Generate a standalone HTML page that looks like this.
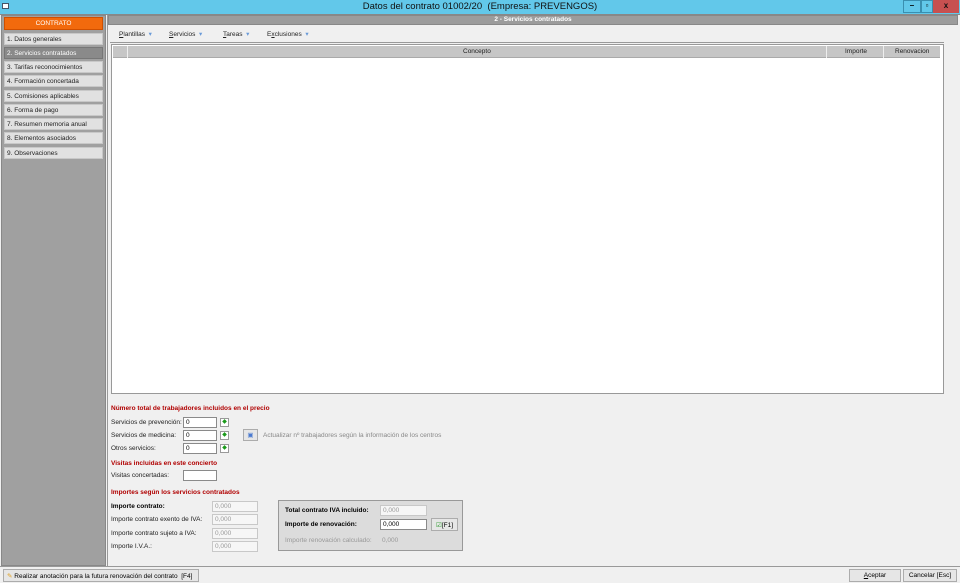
<!DOCTYPE html><html><head><style>
*{margin:0;padding:0;box-sizing:border-box}
body{width:960px;height:583px;background:#f0f0f0;font-family:"Liberation Sans",sans-serif;font-size:6.5px;color:#000;position:relative;overflow:hidden}
div{white-space:nowrap}
.a{position:absolute}
.nav{position:absolute;left:4px;width:99px;height:12px;background:#e1e1e1;border:1px solid #c8c8c8;padding:2px 0 0 2px;font-size:6.5px;color:#222}
.lbl{position:absolute;font-size:6.5px;color:#222}
.in{position:absolute;height:11px;background:#fff;border:1px solid #8a8a8a;font-size:6.5px;padding:1px 2px;color:#000}
.dis{border-color:#c8c8c8;color:#999;background:#f6f6f6}
.h{position:absolute;font-weight:bold;color:#b00000;font-size:6.5px}
.g{position:absolute;width:9px;height:9px;border:1px solid #999;background:#fff;color:#1a9a1a;font-size:6px;line-height:7px;text-align:center}
.btn{position:absolute;height:13px;background:#e6e6e6;border:1px solid #acacac;font-size:6.5px;padding:2px 0;text-align:center}
</style></head><body>
<div class="a" style="left:0;top:0;width:960px;height:14px;background:#62c8ea"></div>
<div class="a" style="left:2px;top:3px;width:7px;height:6px;background:#fff;border:1px solid #456"></div>
<div class="a" style="left:0;top:1px;width:960px;text-align:center;font-size:9.5px;color:#111">Datos del contrato 01002/20 &nbsp;(Empresa: PREVENGOS)</div>
<div class="a" style="left:903px;top:0;width:18px;height:13px;border:1px solid #3a8fb0;text-align:center;font-size:8px;font-weight:bold">–</div>
<div class="a" style="left:921px;top:0;width:12px;height:13px;border:1px solid #3a8fb0;text-align:center;font-size:8px;font-weight:bold">▫</div>
<div class="a" style="left:933px;top:0;width:26px;height:13px;background:#c75050;text-align:center;font-size:8px;font-weight:bold;color:#111;padding-top:1px">x</div>
<div class="a" style="left:0;top:14px;width:960px;height:1px;background:#888"></div>
<div class="a" style="left:1px;top:15px;width:105px;height:551px;background:#a0a0a0;border:1px solid #888"></div>
<div class="a" style="left:4px;top:17px;width:99px;height:13px;background:#f26a0d;border:1px solid #d05000;color:#fff;text-align:center;font-size:6.5px;padding-top:2px">CONTRATO</div>
<div class="nav" style="top:33px">1. Datos generales</div>
<div class="nav" style="top:47px;background:#8a8a8a;color:#fff;border-color:#777">2. Servicios contratados</div>
<div class="nav" style="top:61px">3. Tarifas reconocimientos</div>
<div class="nav" style="top:75px">4. Formación concertada</div>
<div class="nav" style="top:90px">5. Comisiones aplicables</div>
<div class="nav" style="top:104px">6. Forma de pago</div>
<div class="nav" style="top:118px">7. Resumen memoria anual</div>
<div class="nav" style="top:132px">8. Elementos asociados</div>
<div class="nav" style="top:147px">9. Observaciones</div>
<div class="a" style="left:107px;top:15px;width:852px;height:552px;border-left:1px solid #999"></div>
<div class="a" style="left:108px;top:15px;width:850px;height:10px;background:#9c9c9c;border:1px solid #888;color:#fff;text-align:center;font-size:6.5px;font-weight:bold">2 - Servicios contratados</div>
<div class="lbl" style="left:119px;top:30px"><u>P</u>lantillas &nbsp;<span style="color:#6a9ad8">▾</span></div>
<div class="lbl" style="left:169px;top:30px"><u>S</u>ervicios &nbsp;<span style="color:#6a9ad8">▾</span></div>
<div class="lbl" style="left:223px;top:30px"><u>T</u>areas &nbsp;<span style="color:#6a9ad8">▾</span></div>
<div class="lbl" style="left:267px;top:30px">E<u>x</u>clusiones &nbsp;<span style="color:#6a9ad8">▾</span></div>
<div class="a" style="left:110px;top:42px;width:834px;height:1px;background:#999"></div>
<div class="a" style="left:111px;top:44px;width:833px;height:350px;background:#fff;border:1px solid #999"></div>
<div class="a" style="left:113px;top:46px;width:827px;height:12px;background:#c6c6c6;border-bottom:1px solid #aaa"></div>
<div class="a" style="left:127px;top:46px;width:1px;height:12px;background:#eee"></div>
<div class="a" style="left:826px;top:46px;width:1px;height:12px;background:#eee"></div>
<div class="a" style="left:883px;top:46px;width:1px;height:12px;background:#eee"></div>
<div class="lbl" style="left:463px;top:48px">Concepto</div>
<div class="lbl" style="left:845px;top:48px">Importe</div>
<div class="lbl" style="left:895px;top:48px">Renovacion</div>
<div class="h" style="left:111px;top:405px">Número total de trabajadores incluidos en el precio</div>
<div class="lbl" style="left:111px;top:419px">Servicios de prevención:</div>
<div class="in" style="left:183px;top:417px;width:34px">0</div><div class="g" style="left:220px;top:418px">◆</div>
<div class="lbl" style="left:111px;top:432px">Servicios de medicina:</div>
<div class="in" style="left:183px;top:430px;width:34px">0</div><div class="g" style="left:220px;top:431px">◆</div>
<div class="btn" style="left:243px;top:429px;width:15px;height:12px;padding:1px;color:#4a7ad0">▣</div>
<div class="lbl" style="left:263px;top:432px;color:#888">Actualizar nº trabajadores según la información de los centros</div>
<div class="lbl" style="left:111px;top:445px">Otros servicios:</div>
<div class="in" style="left:183px;top:443px;width:34px">0</div><div class="g" style="left:220px;top:444px">◆</div>
<div class="h" style="left:111px;top:460px">Visitas incluidas en este concierto</div>
<div class="lbl" style="left:111px;top:472px">Visitas concertadas:</div>
<div class="in" style="left:183px;top:470px;width:34px"></div>
<div class="h" style="left:111px;top:489px">Importes según los servicios contratados</div>
<div class="lbl" style="left:111px;top:503px;font-weight:bold;color:#000">Importe contrato:</div>
<div class="in dis" style="left:212px;top:501px;width:46px">0,000</div>
<div class="lbl" style="left:111px;top:516px">Importe contrato exento de IVA:</div>
<div class="in dis" style="left:212px;top:514px;width:46px">0,000</div>
<div class="lbl" style="left:111px;top:530px">Importe contrato sujeto a IVA:</div>
<div class="in dis" style="left:212px;top:528px;width:46px">0,000</div>
<div class="lbl" style="left:111px;top:543px">Importe I.V.A.:</div>
<div class="in dis" style="left:212px;top:541px;width:46px">0,000</div>
<div class="a" style="left:278px;top:500px;width:185px;height:51px;background:#dcdcdc;border:1px solid #999"></div>
<div class="lbl" style="left:285px;top:507px;font-weight:bold;color:#000">Total contrato IVA incluido:</div>
<div class="in dis" style="left:380px;top:505px;width:47px">0,000</div>
<div class="lbl" style="left:285px;top:521px;font-weight:bold;color:#000">Importe de renovación:</div>
<div class="in" style="left:380px;top:519px;width:47px">0,000</div>
<div class="btn" style="left:431px;top:518px;width:27px"><span style="color:#2a9a2a">☑</span>[F1]</div>
<div class="lbl" style="left:285px;top:537px;color:#999">Importe renovación calculado:</div>
<div class="lbl" style="left:382px;top:537px;color:#999">0,000</div>
<div class="a" style="left:0;top:566px;width:960px;height:1px;background:#999"></div>
<div class="btn" style="left:3px;top:569px;width:196px;text-align:left;padding-left:3px"><span style="color:#e0a020">✎</span> Realizar anotación para la futura renovación del contrato &nbsp;[F4]</div>
<div class="btn" style="left:849px;top:569px;width:52px"><u>A</u>ceptar</div>
<div class="btn" style="left:903px;top:569px;width:54px">Cancelar [Esc]</div>
</body></html>
